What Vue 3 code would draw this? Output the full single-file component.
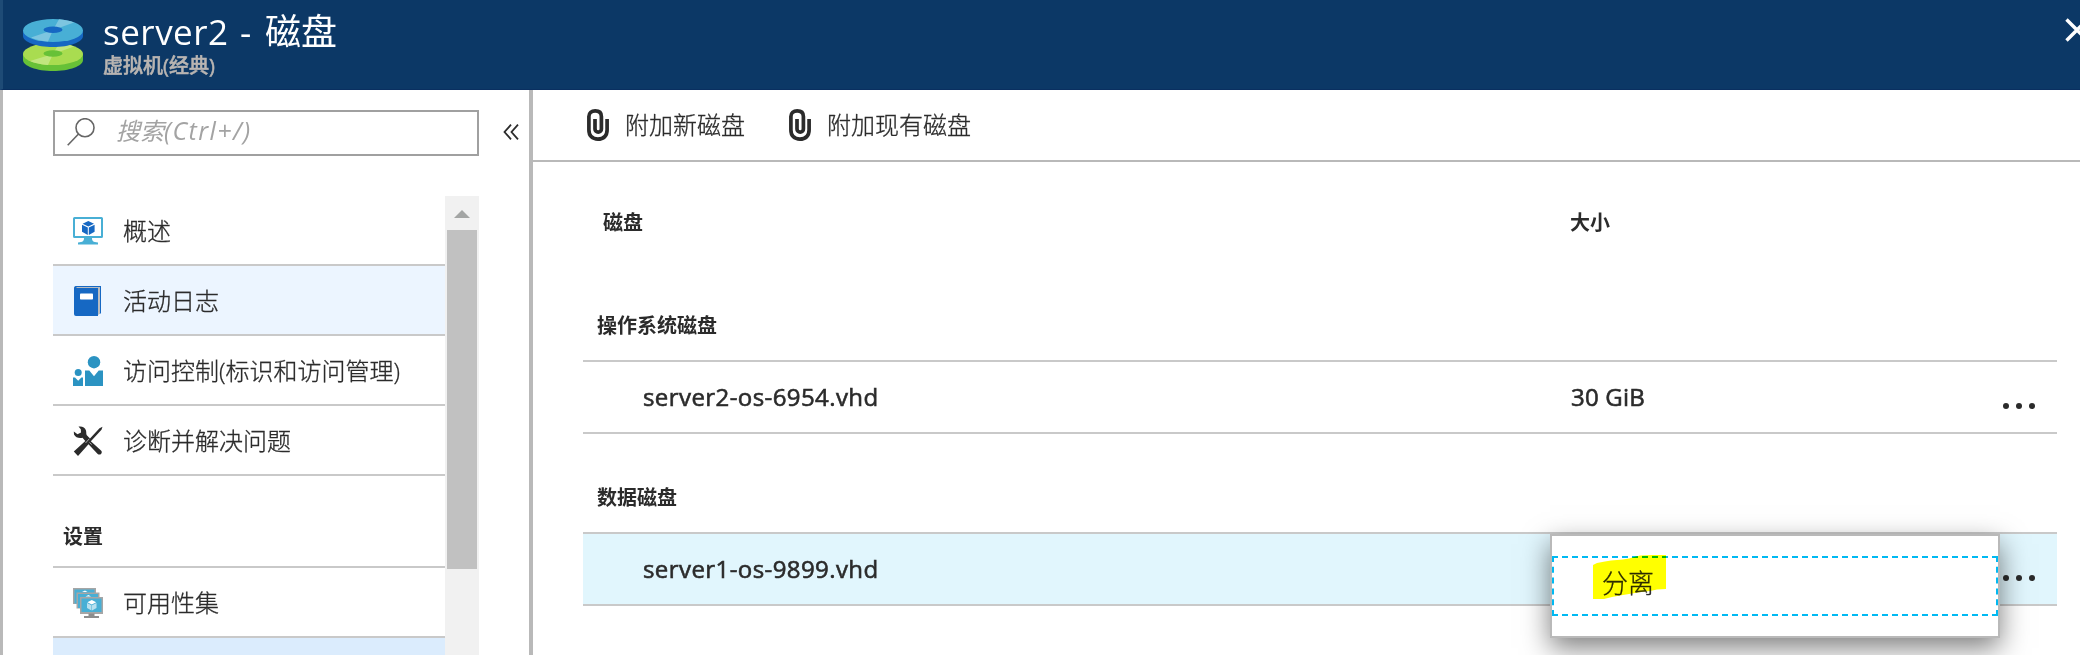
<script setup>
const menu = [
  { id: 'overview', label: '概述' },
  { id: 'log', label: '活动日志', active: true },
  { id: 'access', label: '访问控制(标识和访问管理)' },
  { id: 'tools', label: '诊断并解决问题' },
]
const commands = ['附加新磁盘', '附加现有磁盘']
</script>

<template>
  <div class="blade">
    <header class="header">
      <svg class="disk-icon" viewBox="0 0 60 52">
        <path d="M0 35v6c0 6 13.500 11 30 11s30-5 30-11v-6z" fill="#67c137" />
        <ellipse cx="30" cy="35" rx="30" ry="11" fill="#a9dc50" />
        <path d="M30 35L7 42c4 2 11 3.500 18 4zM30 35l6-10.500c7 .5 11 1.500 15 3z" fill="#c1e67f" />
        <ellipse cx="30" cy="34.500" rx="9.500" ry="3.200" fill="#67c137" />
        <path d="M0 11v6c0 6 13.500 11 30 11s30-5 30-11v-6z" fill="#1668c3" />
        <ellipse cx="30" cy="11.500" rx="30" ry="11.500" fill="#48afd5" />
        <path d="M30 11L8 18.500c4 2 10 3.500 17 4zM30 11L36 .2c6 .5 11 1.500 15 3.200z" fill="#7dc5e0" />
        <ellipse cx="30" cy="10.700" rx="9.500" ry="3.200" fill="#1668c3" />
      </svg>
      <div class="titles">
        <h1><span class="name">server2</span><span class="dash">-</span><span>磁盘</span></h1>
        <p>虚拟机(经典)</p>
      </div>
      <svg class="close" viewBox="0 0 15 24"><path d="M1.500 1.500l21 21M1.500 22.500l21-21" stroke="#fff" stroke-width="3.400" /></svg>
    </header>

    <div class="body">
      <aside class="sidebar">
        <div class="search-row">
          <div class="search">
            <svg viewBox="0 0 28 28"><circle cx="18" cy="9.700" r="9" /><path d="M11.500 16L.7 27.300" /></svg>
            <span>搜索<em>(Ctrl+/)</em></span>
          </div>
          <svg class="collapse" viewBox="0 0 16 16"><path d="M8 .7L1.500 8 8 15.300M15 .7L8.500 8 15 15.300" /></svg>
        </div>

        <div class="nav">
          <div class="list">
            <div v-for="m in menu" :key="m.id" class="item" :class="{ active: m.active }">
              <svg v-if="m.id === 'overview'" viewBox="0 0 30 30">
                <path d="M1.500 1h27a1.500 1.500 0 0 1 1.500 1.500v18a1.500 1.500 0 0 1-1.500 1.500h-27A1.500 1.500 0 0 1 0 20.500v-18A1.500 1.500 0 0 1 1.500 1z" fill="#48afd5" />
                <path d="M2 3h26v17H2z" fill="#fff" />
                <path d="M11 22h8c0 3 1 4 6 4.500V28.500H5v-2c5-.5 6-1.500 6-4.500z" fill="#48afd5" />
                <path d="M15.300 5l5.700 2.700-5.700 2.800-5.700-2.800zM9 8.800l5.800 2.800V19L9 15.800zM21.600 8.800l-5.800 2.800V19l5.800-3.200z" fill="#1668c3" />
              </svg>
              <svg v-else-if="m.id === 'log'" viewBox="0 0 30 30">
                <path d="M2.500 0H28v27.500h-3V30H3a2 2 0 0 1-2-2V2a2 2 0 0 1 1.500-2z" fill="#1668c3" />
                <path d="M3.500 1H27v26.500L25 29V2H3.500z" fill="#b9bcc0" />
                <rect x="7" y="7.500" width="13" height="6" rx=".8" fill="#fff" />
              </svg>
              <svg v-else-if="m.id === 'access'" viewBox="0 0 30 30" fill="#2b93c2">
                <circle cx="21" cy="6.200" r="6.200" />
                <circle cx="5.200" cy="16.500" r="3.500" />
                <path d="M12 14.500h4.300L21 20.300l4.700-5.800H30V30H12zM0 21.500h2l3.200 3.300L8.400 21.500H10V30H0z" />
              </svg>
              <svg v-else viewBox="0 0 30 30" fill="#2b2b2b">
                <path d="M5.500.5C9 0 12 1 13 4.500c.5 2 0 3.500.8 4.700l3.200 3.300 9.500-10.300L29.500.8l-1 3-9.700 10.500-1 1L28 24.500c1 1 1 2.200.2 3.200s-2.400 1.200-3.500.2L15.500 18.200 5 30 .8 25.500 12.300 15 9.500 11.800C6 12.600 2.500 11.500 1 8.500L.8 5.500l3.700 2.700L8 6.500l-.2-3.300z" />
                <path d="M12.500 17l3.800-4.200M16.500 16.500l2.200 2" stroke="#fff" stroke-width=".6" />
              </svg>
              <span>{{ m.label }}</span>
            </div>
            <div class="group">设置</div>
            <div class="item">
              <svg viewBox="0 0 30 30">
                <path d="M0 0h23v16H0z" fill="#a6a6a6" /><path d="M1.500 1.500h20v14h-20z" fill="#48afd5" />
                <path d="M3.500 4.500h23v16h-23z" fill="#a6a6a6" /><path d="M5 6h20v14H5z" fill="#48afd5" />
                <path d="M9 4l3-1.500L14.500 4zM12.500 8.500l3-1.500L18 8.500z" fill="#fff" />
                <path d="M7 9h23v17H7z" fill="#a6a6a6" /><path d="M8.500 10.500h20v13.500h-20z" fill="#48afd5" />
                <path d="M15.500 25.500h6V28h4.500v2H11v-2h4.500z" fill="#8d8d8d" />
                <path d="M18.800 12l4.400 2.300-4.400 2.300-4.400-2.300z" fill="#fff" />
                <path d="M14 15l4.500 2.300v5.200L14 20zM23.500 15L19 17.300v5.200l4.500-2.500z" fill="#b8e0ef" />
              </svg>
              <span>可用性集</span>
            </div>
            <div class="item selected"></div>
          </div>
          <div class="scrollbar">
            <svg viewBox="0 0 16 8"><path d="M8 0l8 8H0z" fill="#a3a5a4" /></svg>
            <div class="thumb"></div>
          </div>
        </div>
      </aside>

      <main class="main">
        <div class="toolbar">
          <div v-for="c in commands" :key="c" class="command">
            <svg viewBox="0 0 22 32"><path d="M8 10v10a3.200 3.200 0 0 0 6.400 0V7.500C14.400 3.700 12 1.900 8.200 1.900S1.900 4 1.900 7.500V21c0 6 3.500 9.100 9 9.100s9.200-3.100 9.200-9.100V10" /></svg>
            <span>{{ c }}</span>
          </div>
        </div>
        <div class="content">
          <div class="columns"><span>磁盘</span><span>大小</span></div>
          <h2>操作系统磁盘</h2>
          <div class="row">
            <span class="file">server2-os-6954.vhd</span>
            <span class="size">30 GiB</span>
            <span class="dots"><i></i><i></i><i></i></span>
          </div>
          <h2>数据磁盘</h2>
          <div class="row hover">
            <span class="file">server1-os-9899.vhd</span>
            <span class="size"></span>
            <span class="dots"><i></i><i></i><i></i></span>
            <div class="popup">
              <div class="option"><span>分离</span></div>
              <svg class="marker" viewBox="0 0 73 44"><path d="M0 10l4-2 8-1.500 6-1 12-1 6-1 5-1.500 6-1.500L60 0h13v34l-9 .5-7 1.500-9 1-12 2-9 1.500-8 1.500-8 2H0z" fill="#ff0" /></svg>
            </div>
          </div>
        </div>
      </main>
    </div>
  </div>
</template>

<style>
body { margin: 0; overflow: hidden; }
</style>

<style scoped>
* { box-sizing: border-box; }
.blade {
  width: 2080px; height: 655px; overflow: hidden; display: flex; flex-direction: column;
  background: #fff; color: #2b2b2b; font: 24px/32px "Open Sans", "Noto Sans CJK SC", sans-serif;
}
svg { display: block; flex: none; }
span { white-space: nowrap; }
.header { height: 90px; flex: none; display: flex; background: #0c3866; border-left: 3px solid #1e4b76; border-bottom: 1px solid #0a2f60; }
.disk-icon { width: 60px; height: 52px; margin: 19px 0 0 20px; }
.titles { margin-left: 20px; flex: 1; }
h1 { margin: 7px 0 0; display: flex; font-size: 36px; line-height: 50px; font-weight: 400; color: #fff; }
.name { width: 137px; font-size: 35px; letter-spacing: .5px; }
.dash { width: 25px; font-size: 35px; }
p { margin: -5px 0 0; font-size: 20px; line-height: 28px; font-weight: 500; color: #b9b5b2; -webkit-text-stroke: .5px #b9b5b2; }
.close { width: 15px; height: 24px; margin-top: 18px; overflow: hidden; }
.body { flex: 1; display: flex; min-height: 0; border-left: 3px solid #b9b9b9; }
.sidebar { width: 530px; flex: none; border-right: 4px solid #b9b9b9; padding: 20px 0 0 50px; }
.search-row { display: flex; align-items: flex-start; }
.search { width: 426px; height: 46px; border: 2px solid #a0a0a0; display: flex; padding: 6px 0 0 12px; color: #a3a3a3; font-style: italic; }
.search svg { width: 28px; height: 28px; fill: none; stroke: #666; stroke-width: 1.6; }
.search span { margin: -4px 0 0 21px; }
.search em { font-size: 25px; letter-spacing: 1.4px; }
.collapse { width: 16px; height: 16px; margin: 14px 0 0 24px; fill: none; stroke: #2b2b2b; stroke-width: 1.8; }
.nav { display: flex; width: 426px; height: 459px; margin-top: 40px; overflow: hidden; }
.list { width: 392px; }
.item { height: 70px; border-bottom: 2px solid #c9c9c9; padding: 2px 0 0 20px; display: flex; align-items: center; font-weight: 300; }
.item svg { width: 30px; height: 30px; }
.item span { margin-left: 20px; }
.item span, .command span, .option span { -webkit-text-stroke: .3px #2b2b2b; }
.active { background: #ecf5ff; }
.selected { background: #dbecfd; }
.group { height: 92px; border-bottom: 2px solid #c9c9c9; padding: 46px 0 0 10px; font-size: 20px; line-height: 30px; font-weight: 700; }
.scrollbar { width: 34px; background: #f1f1f1; padding: 14px 2px 0; }
.scrollbar svg { width: 16px; height: 8px; margin: 0 auto; }
.thumb { height: 339px; margin-top: 12px; background: #c1c1c1; }
.main { flex: 1; min-width: 0; }
.toolbar { height: 72px; border-bottom: 2px solid #b9b9b9; display: flex; gap: 44px; padding: 19px 0 0 54px; font-weight: 300; }
.command { display: flex; gap: 16px; }
.command svg { width: 22px; height: 32px; fill: none; stroke: #2b2b2b; stroke-width: 3.7; }
.content { margin-left: 50px; width: 1474px; }
.columns { display: grid; grid-template-columns: 967px 1fr; padding: 46px 0 0 20px; height: 100px; font-size: 20px; line-height: 30px; font-weight: 700; }
h2 { margin: 0; height: 100px; padding: 49px 0 0 14px; font-size: 20px; line-height: 30px; font-weight: 700; border-bottom: 2px solid #c9c9c9; }
.row { position: relative; height: 72px; border-bottom: 2px solid #c9c9c9; display: grid; grid-template-columns: 988px 432px 1fr; align-items: center; }
.file, .size { -webkit-text-stroke: .6px #2b2b2b; letter-spacing: .42px; }
.file { padding-left: 60px; }
.size { letter-spacing: .2px; }
.hover { background: #e1f6fd; }
.dots { display: flex; gap: 7px; padding-top: 18px; }
.dots i { width: 6px; height: 6px; border-radius: 50%; background: #2b2b2b; }
.popup { position: absolute; left: 967px; top: 0; width: 450px; height: 104px; padding-top: 20px; background: #fff; border: 2px solid #b9b9b9; box-shadow: 0 10px 26px rgba(0,0,0,.5); }
.option { height: 60px; border: 2px dashed #00b9f2; padding: 7px 0 0 48px; font-size: 26px; line-height: 36px; font-weight: 300; }
.marker { position: absolute; left: 41px; top: 19px; width: 73px; height: 44px; mix-blend-mode: multiply; }
</style>
